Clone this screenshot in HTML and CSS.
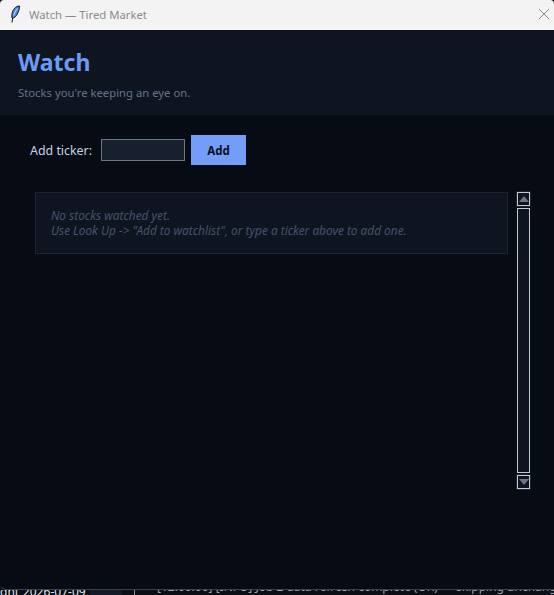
FILE: index.html
```html
<!DOCTYPE html>
<html lang="en">
<head>
<meta charset="utf-8">
<title>Watch — Tired Market</title>
<link rel="stylesheet" href="styles.css">
</head>
<body>
<div class="window">
  <div class="titlebar">
    <svg class="feather" width="12" height="18" viewBox="0 0 12 18">
      <path d="M10.5 1C7 1 3.5 4.5 3 9L2.8 12.5 4.8 13C8 10.5 10.5 6 10.5 1Z" fill="#4a8cf0" stroke="#111" stroke-width="1"/>
      <path d="M8.5 3.5C6.8 5.5 5.5 8 4.8 10.5" fill="none" stroke="#cfe2fb" stroke-width="1"/>
      <path d="M3.6 13L3 17.5" fill="none" stroke="#111" stroke-width="1"/>
    </svg>
    <span class="title-text">Watch — Tired Market</span>
    <svg class="close" width="12" height="12" viewBox="0 0 12 12">
      <path d="M1 1L11 11M11 1L1 11" stroke="#8a8a8a" stroke-width="1" fill="none"/>
    </svg>
  </div>
  <header class="head">
    <h1 class="head-title">Watch</h1>
    <p class="head-sub">Stocks you're keeping an eye on.</p>
  </header>
  <main class="content">
    <div class="add-row">
      <label class="add-label" for="ticker">Add ticker:</label>
      <input class="add-input" id="ticker" type="text">
      <button class="add-btn" type="button">Add</button>
    </div>
    <div class="list-area">
      <div class="empty-card">
        <p class="empty-text">No stocks watched yet.<br>Use Look Up -&gt; "Add to watchlist", or type a ticker above to add one.</p>
      </div>
      <div class="scrollbar">
        <div class="sb-btn"><svg width="10" height="6" viewBox="0 0 10 6"><path d="M5 0L10 6H0Z" fill="#6b7688"/></svg></div>
        <div class="sb-thumb"></div>
        <div class="sb-btn"><svg width="10" height="6" viewBox="0 0 10 6"><path d="M0 0H10L5 6Z" fill="#6b7688"/></svg></div>
      </div>
    </div>
  </main>
</div>
<div class="behind">
  <span class="behind-left">ght</span>
  <span class="behind-date">2026-07-09</span>
  <span class="behind-block"></span>
  <span class="behind-sep"></span>
  <span class="behind-log">[12:00:00] [INFO] Job 2 data refresh complete (OK) — skipping unchanged</span>
</div>
</body>
</html>
```
FILE: styles.css
```css
* { box-sizing: border-box; }
html, body {
  margin: 0;
  height: 595px;
  overflow: hidden;
  background: #0b0e14;
  font-family: "Noto Sans", sans-serif;
}
.window {
  height: 590px;
  display: flex;
  flex-direction: column;
  background: #070b13;
  border-bottom: 1px solid #3b404a;
  border-radius: 4px 4px 0 6px;
  overflow: hidden;
}
.titlebar {
  height: 30px;
  flex: none;
  background: #f3f3f3;
  display: flex;
  align-items: center;
  padding: 0 4px 2px 9px;
}
.feather { flex: none; }
.title-text {
  margin-left: 8px;
  font-size: 11.3px;
  color: #8b8b8b;
  flex: 1;
}
.close { flex: none; }
.head {
  height: 85px;
  flex: none;
  background: #0f1520;
  padding: 17px 18px 0;
}
.head-title {
  margin: 0;
  font-size: 23px;
  line-height: 31px;
  font-weight: 700;
  color: #6c9bf6;
}
.head-sub {
  margin: 7px 0 0;
  font-size: 11.3px;
  line-height: 16px;
  color: #66728a;
}
.content {
  flex: 1;
  padding: 20px 24px 0 30px;
}
.add-row {
  display: flex;
  align-items: center;
  height: 30px;
}
.add-label {
  font-size: 12.4px;
  color: #c4d2e8;
}
.add-input {
  width: 84px;
  height: 22px;
  margin: 0 6px 0 9px;
  background: #181f2e;
  border: 1px solid #6f7682;
  padding: 0 4px;
  outline: none;
}
.add-btn {
  width: 55px;
  height: 30px;
  border: 0;
  background: #739df8;
  color: #0a0e16;
  font-family: "Noto Sans", sans-serif;
  font-size: 11.5px;
  font-weight: 700;
  padding: 0;
}
.list-area {
  display: flex;
  align-items: flex-start;
  margin-top: 27px;
  padding-left: 5px;
}
.empty-card {
  width: 473px;
  height: 62px;
  flex: none;
  background: #0f1520;
  border: 1px solid #1b2434;
  padding: 15px 15px 0;
}
.empty-text {
  margin: 0;
  font-size: 11.85px;
  line-height: 15px;
  font-style: italic;
  color: #465269;
}
.scrollbar {
  width: 13px;
  margin-left: 9px;
  display: flex;
  flex-direction: column;
  gap: 2px;
  height: 297px;
}
.sb-btn {
  height: 14px;
  flex: none;
  border: 1px solid #c5cad2;
  background: #0f1520;
  display: flex;
  align-items: center;
  justify-content: center;
  box-shadow: 0 0 0 1px #1b2230;
}
.sb-thumb {
  flex: 1;
  border: 1px solid #c5cad2;
  background: #0f1520;
}
.behind {
  height: 5px;
  overflow: hidden;
  display: flex;
  align-items: flex-start;
  font-size: 12px;
  line-height: 12px;
  color: #9aa3b2;
  white-space: nowrap;
}
.behind-left {
  flex: none;
  width: 23px;
  margin-top: -4px;
  color: #dfe6f2;
}
.behind-date {
  flex: none;
  width: 67px;
  margin-top: -4px;
  color: #dfe6f2;
}
.behind-block {
  flex: none;
  width: 32px;
  height: 5px;
  background: #141a28;
}
.behind-sep {
  flex: none;
  width: 1px;
  height: 5px;
  margin-left: 12px;
  background: #8a8f99;
}
.behind-log {
  flex: none;
  margin-left: 22px;
  margin-top: -9px;
}
```
